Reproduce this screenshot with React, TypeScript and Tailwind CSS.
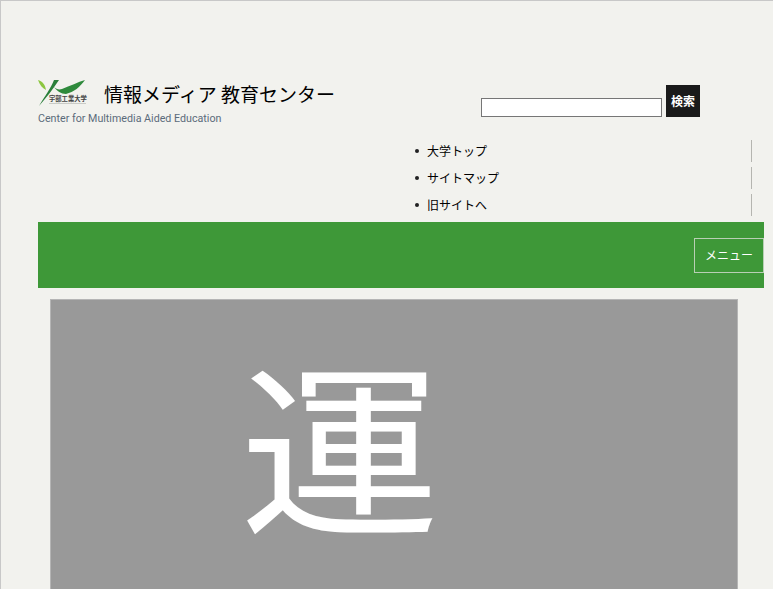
const jp = { fontFamily: '"Noto Sans CJK JP", sans-serif' };

const links = ['大学トップ', 'サイトマップ', '旧サイトへ'];

const Logo = () => (
  <div className="relative h-[26px] w-[50px]">
    <svg width="50" height="26" viewBox="0 0 50 26" className="block">
      <path d="M0 0 C4 1 7 4 8 10 C4 8 2 5 0 0Z" fill="#8cc63f" />
      <path d="M21 0 L16 0 C13 8 7 16 1 26 C8 18 15 9 21 0Z" fill="#2a7f3a" />
      <path d="M16 7 C18 9 21 10 24 9 C32 6 40 2 47 0 C42 7 36 12 28 14 C23 14 19 11 16 7Z" fill="#2f8a3c" />
      <rect x="11" y="23" width="37" height="1" fill="#c9cbc6" />
    </svg>
    <span className="absolute top-[15px] left-[11px] text-[6.3px] leading-[7px] font-bold whitespace-nowrap text-[#444]" style={jp}>
      宇部工業大学
    </span>
  </div>
);

export default function App() {
  return (
    <div className="h-[589px] overflow-hidden border-t border-l border-[#c8c8c8] bg-[#f2f2ee]" style={jp}>
      <div className="flex pt-[79px] pl-[37px]">
        <div className="w-[443px]">
          <div className="flex items-start gap-[16px]">
            <Logo />
            <h1 className="text-[19px] leading-[28px] font-normal whitespace-nowrap text-black">情報メディア 教育センター</h1>
          </div>
          <p className="mt-[4px] text-[10.7px] leading-[14px] text-[#5b6b7b]" style={{ fontFamily: 'Roboto, sans-serif' }}>
            Center for Multimedia Aided Education
          </p>
        </div>
        <div className="mt-[5px] flex h-[32px] items-end gap-[4px]">
          <input className="box-border h-[19px] w-[181px] border border-[#767676] bg-white" />
          <button className="h-[32px] w-[34px] bg-[#1a1a1a] text-[12px] font-bold text-white">検索</button>
        </div>
      </div>

      <ul className="mt-[14px] ml-[414px] flex w-[337px] flex-col gap-[5px]">
        {links.map((l) => (
          <li key={l} className="flex h-[22px] items-center gap-[8px] border-r border-[#b5b5b0] text-[12px] leading-[20px] text-black">
            <span className="h-[4px] w-[4px] rounded-full bg-[#222]" />
            {l}
          </li>
        ))}
      </ul>

      <div className="mt-[6px] ml-[37px] flex h-[66px] w-[726px] items-center justify-end bg-[#3e9838]">
        <button className="h-[35px] w-[70px] border border-[#b9cfb5] text-[12px] text-white">メニュー</button>
      </div>

      <div className="mt-[11px] ml-[49px] flex h-[400px] w-[688px] border border-[#b5b5b5] bg-[#999999] pl-[189px]">
        <span className="origin-center scale-y-[0.92] text-[200px] leading-[273px] text-white">運</span>
      </div>
    </div>
  );
}
